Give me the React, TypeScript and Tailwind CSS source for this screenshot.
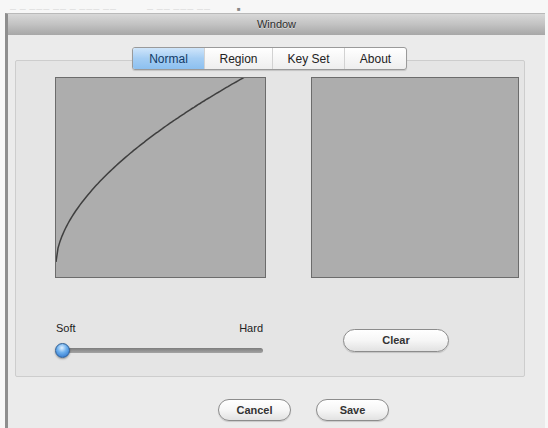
import React from 'react';

const TABS = ['Normal', 'Region', 'Key Set', 'About'];
const TAB_WIDTHS = ['w-[71px]', 'w-[68px]', 'w-[72px]', 'w-[62px]'];

// curve on the left canvas, roughly h = 16 + a * x^0.57
function curvePoints() {
  const pts: string[] = [];
  const a = 184 / Math.pow(187, 0.57);
  for (let x = 0; x <= 188; x += 2) {
    const y = 200 - (16 + a * Math.pow(x, 0.57));
    pts.push(`${x},${y.toFixed(1)}`);
  }
  return pts.join(' ');
}

function PillButton({ label, className }: { label: string; className: string }) {
  return (
    <div
      className={`flex items-center justify-center rounded-full border border-[#8c8c8c] bg-gradient-to-b from-white via-[#f6f6f6] to-[#e2e2e2] text-[11px] font-bold text-[#333] shadow-[0_1px_1px_rgba(0,0,0,0.15)] ${className}`}
    >
      {label}
    </div>
  );
}

export default function App() {
  return (
    <div className="w-[548px] h-[428px] overflow-hidden bg-[#f7f7f7] font-['Liberation_Sans','DejaVu_Sans',sans-serif]">
      {/* strip above the window */}
      <div className="h-[13px] flex items-end pl-[10px] gap-[6px] pb-[1px] text-[6px] leading-none text-[#c4c4c4] tracking-[1px]">
        <span>— — ——— —— — ——— ——</span>
        <span className="ml-[24px]">— —— ——— ——</span>
        <span className="ml-[20px] text-[#888]">■</span>
      </div>

      {/* window */}
      <div className="ml-[5px] w-[540px] flex flex-col">
        <div className="h-[22px] border-l-[3px] border-t border-[#8e8e8e] border-t-[#b9b9b9] bg-gradient-to-b from-[#d8d8d8] via-[#c2c2c2] to-[#a7a7a7] flex items-center justify-center">
          <span className="text-[11px] text-[#2e2e2e] [text-shadow:0_1px_0_rgba(255,255,255,0.5)]">Window</span>
        </div>

        <div className="h-[393px] border-l-[3px] border-[#8e8e8e] bg-[#ebebeb] flex flex-col pt-[12px]">
          {/* tabs */}
          <div className="relative z-10 ml-[124px] flex h-[23px] rounded-[3px] border border-[#9a9a9a] bg-gradient-to-b from-white to-[#eeeeee] shadow-[0_1px_1px_rgba(0,0,0,0.15)] self-start">
            {TABS.map((t, i) => (
              <div
                key={t}
                className={`${TAB_WIDTHS[i]} flex items-center justify-center text-[12px] ${
                  i === 0
                    ? 'bg-gradient-to-b from-[#cfe5fa] via-[#a4cdf3] to-[#8cc0f0] text-[#123a66] rounded-l-[2px]'
                    : 'text-[#222] border-l border-[#d2d2d2]'
                }`}
              >
                {t}
              </div>
            ))}
          </div>

          {/* tab box */}
          <div className="-mt-[10px] ml-[7px] w-[510px] h-[317px] rounded-[2px] border border-[#cdcdcd] bg-[#e5e5e5] flex flex-col pt-[16px] pl-[39px]">
            <div className="flex gap-[45px]">
              <div className="w-[211px] h-[201px] border border-[#6c6c6c] bg-[#adadad]">
                <svg width="209" height="199" viewBox="0 0 209 199">
                  <polyline points={curvePoints()} fill="none" stroke="#3f3f3f" strokeWidth="1.5" />
                </svg>
              </div>
              <div className="w-[208px] h-[201px] border border-[#6c6c6c] bg-[#adadad]" />
            </div>

            <div className="flex mt-[44px]">
              {/* slider */}
              <div className="w-[210px] flex flex-col">
                <div className="flex justify-between pl-[1px] pr-[2px] text-[11px] leading-[12px] text-[#222]">
                  <span>Soft</span>
                  <span>Hard</span>
                </div>
                <div className="relative mt-[9px] h-[14px] flex items-center">
                  <div className="ml-[2px] w-[206px] h-[5px] rounded-full bg-gradient-to-b from-[#7d7d7d] to-[#a4a4a4]" />
                  <div className="absolute left-0 top-0 w-[15px] h-[15px] rounded-full border border-[#2d5d93] bg-[radial-gradient(circle_at_45%_30%,#e3f1ff_0%,#6fb1ee_40%,#1e66c4_100%)] shadow-[0_1px_2px_rgba(0,0,0,0.35)]" />
                </div>
              </div>
              <PillButton label="Clear" className="ml-[78px] mt-[7px] w-[106px] h-[23px]" />
            </div>
          </div>

          {/* dialog buttons */}
          <div className="flex gap-[25px] ml-[210px] mt-[22px]">
            <PillButton label="Cancel" className="w-[73px] h-[22px]" />
            <PillButton label="Save" className="w-[73px] h-[22px]" />
          </div>
        </div>
      </div>
    </div>
  );
}
